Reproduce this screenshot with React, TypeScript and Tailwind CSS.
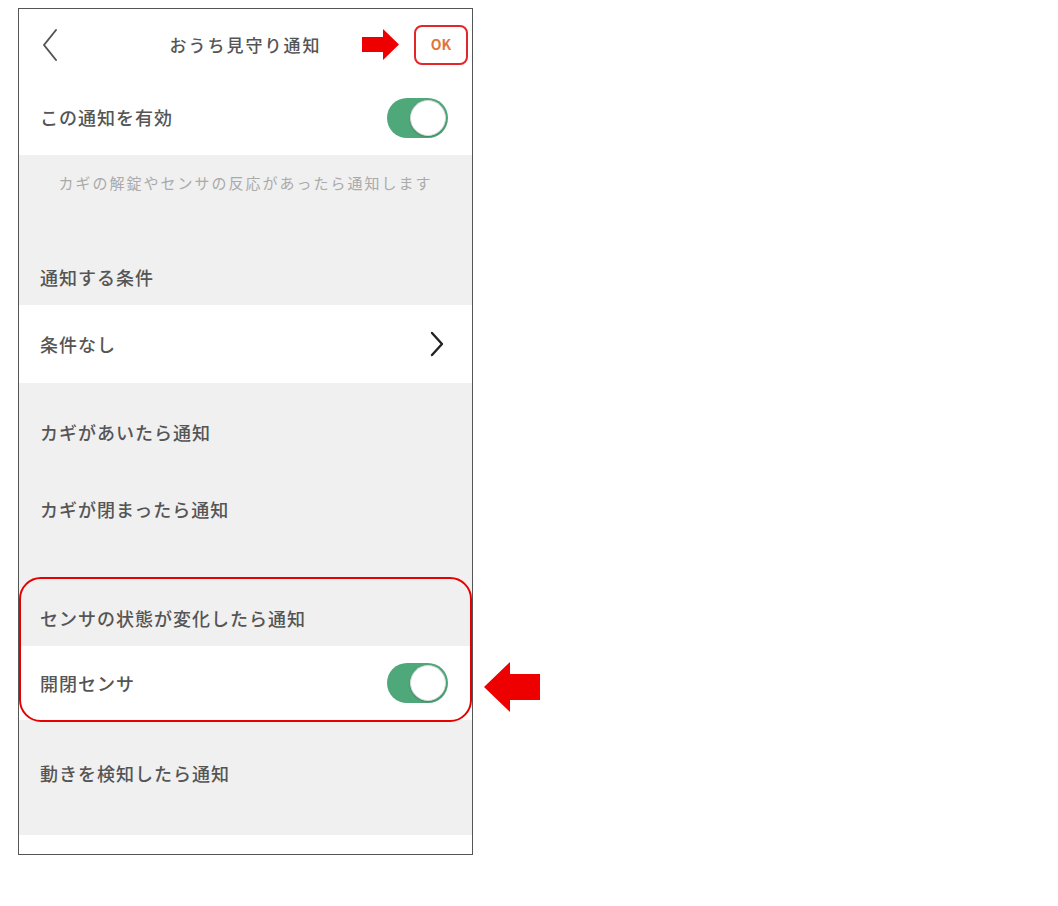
import React from 'react'

const font = { fontFamily: '"Noto Sans CJK JP", "Noto Sans", sans-serif' }

function Toggle() {
  return (
    <div className="relative h-[40px] w-[61px] rounded-full bg-[#4fa87a]">
      <div className="absolute right-[2px] top-[2px] h-[36px] w-[36px] rounded-full border border-[#d8d8d8] bg-white shadow-[0_1px_2px_rgba(0,0,0,0.2)]" />
    </div>
  )
}

function Label({ children }: { children: React.ReactNode }) {
  return <span className="text-[18px] font-medium tracking-[1px] text-[#555]">{children}</span>
}

export default function App() {
  return (
    <div className="relative h-[906px] w-[1058px] bg-white" style={font}>
      <div className="pl-[18px] pt-[8px]">
        <div className="w-[455px] border border-[#555] bg-white">
          {/* Header */}
          <div className="grid h-[71px] grid-cols-[1fr_auto_1fr] items-center px-[4px]">
            <svg className="ml-[18px]" width="18" height="34" viewBox="0 0 18 34" fill="none">
              <path d="M15 2 L3 17 L15 32" stroke="#555" strokeWidth="2" strokeLinecap="round" strokeLinejoin="round" />
            </svg>
            <span className="text-[17px] font-medium tracking-[2px] text-[#555]">おうち見守り通知</span>
            <div className="flex justify-end">
              <div className="flex h-[40px] w-[54px] items-center justify-center rounded-[8px] border-2 border-[#e3262a]">
                <span className="text-[14px] font-bold text-[#e0733f]">OK</span>
              </div>
            </div>
          </div>

          <div className="flex h-[75px] items-center justify-between pl-[21px] pr-[24px]">
            <Label>この通知を有効</Label>
            <Toggle />
          </div>

          <div className="bg-[#f0f0f0] pb-[6px]">
            <div className="flex h-[56px] items-center justify-center">
              <span className="text-[15px] tracking-[2px] text-[#aaa]">カギの解錠やセンサの反応があったら通知します</span>
            </div>
            <div className="h-[44px]" />
            <div className="flex h-[44px] items-center pl-[21px]">
              <Label>通知する条件</Label>
            </div>
          </div>

          <div className="flex h-[78px] items-center justify-between pl-[21px] pr-[28px]">
            <Label>条件なし</Label>
            <svg width="14" height="26" viewBox="0 0 14 26" fill="none">
              <path d="M2 2 L12 13 L2 24" stroke="#222" strokeWidth="2.4" strokeLinecap="round" strokeLinejoin="round" />
            </svg>
          </div>

          <div className="bg-[#f0f0f0] pt-[11px]">
            <div className="flex h-[77px] items-center pl-[21px]">
              <Label>カギがあいたら通知</Label>
            </div>
            <div className="flex h-[77px] items-center pl-[21px]">
              <Label>カギが閉まったら通知</Label>
            </div>
            <div className="h-[42px]" />
            <div className="flex h-[56px] items-center pl-[21px]">
              <Label>センサの状態が変化したら通知</Label>
            </div>
          </div>

          <div className="flex h-[74px] items-center justify-between pl-[21px] pr-[24px]">
            <Label>開閉センサ</Label>
            <Toggle />
          </div>

          <div className="bg-[#f0f0f0] pb-[9px]">
            <div className="flex h-[106px] items-center pl-[21px]">
              <Label>動きを検知したら通知</Label>
            </div>
          </div>

          <div className="h-[19px]" />
        </div>
      </div>

      {/* Annotations */}
      <svg className="absolute left-[362px] top-[29px]" width="37" height="31" viewBox="0 0 37 31">
        <polygon points="0,8 21,8 21,0 37,15.5 21,31 21,23 0,23" fill="#ee0000" />
      </svg>
      <div className="absolute left-[19px] top-[577px] h-[145px] w-[453px] rounded-[22px] border-2 border-[#e60000]" />
      <svg className="absolute left-[484px] top-[662px]" width="56" height="50" viewBox="0 0 56 50">
        <polygon points="0,25 26,0 26,12 56,12 56,38 26,38 26,50" fill="#ee0000" />
      </svg>
    </div>
  )
}
